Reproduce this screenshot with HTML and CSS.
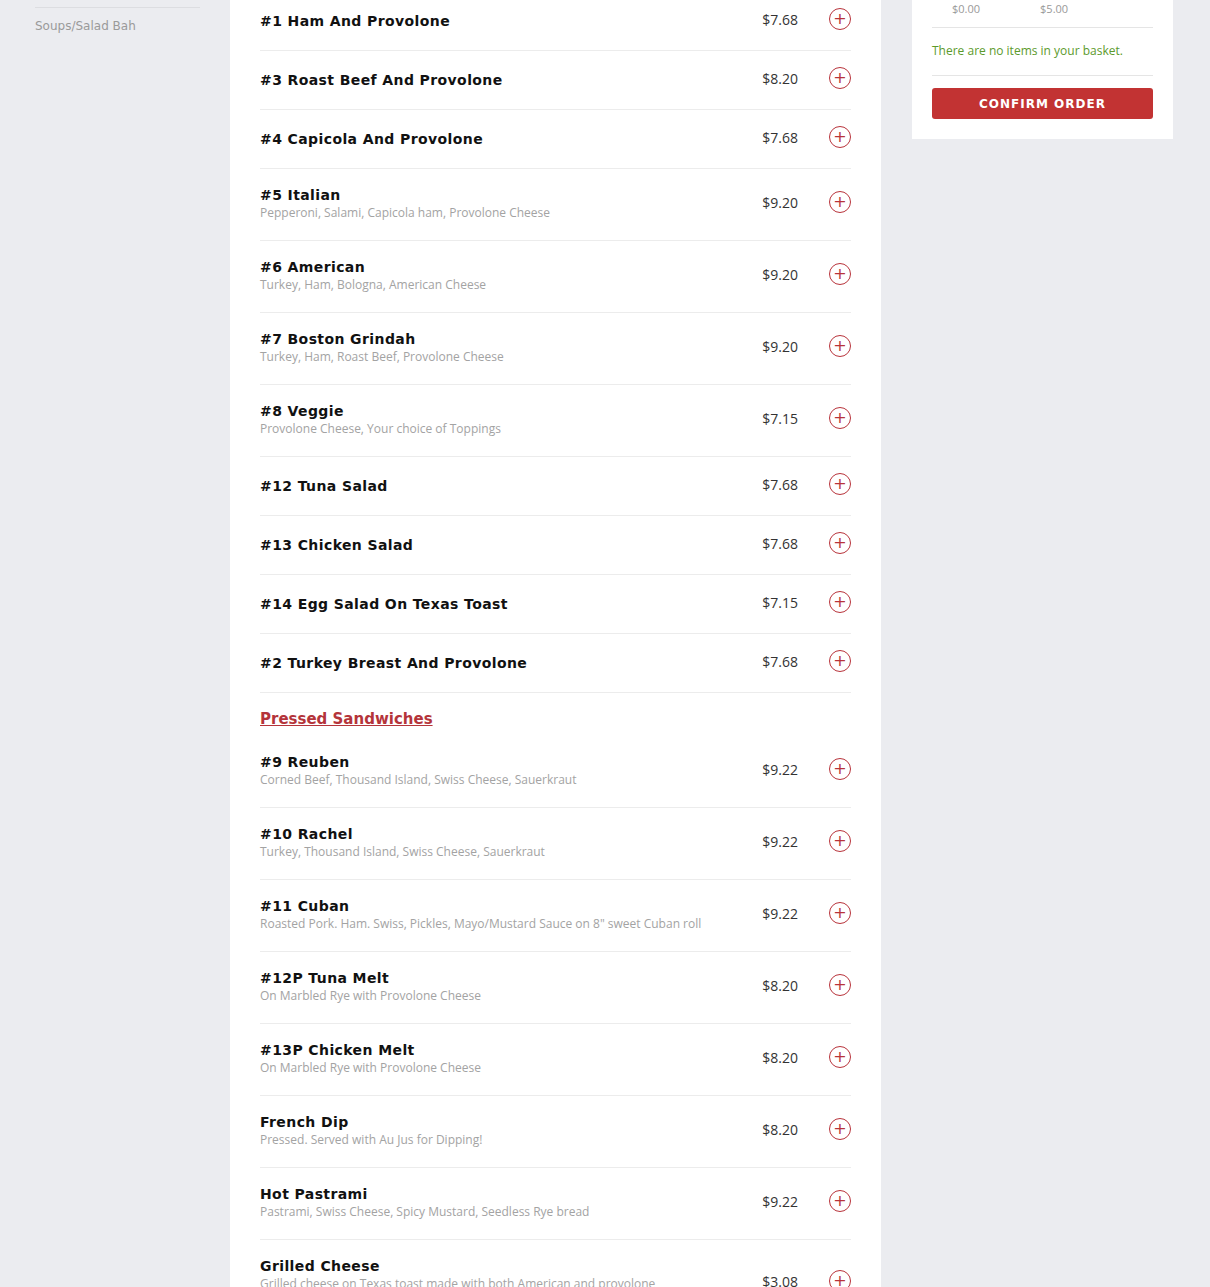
FILE: index.html
```html
<!DOCTYPE html>
<html lang="en">
<head>
  <meta charset="UTF-8" />
  <meta name="viewport" content="width=device-width, initial-scale=1.0"/>
  <title>Menu</title>
  <link rel="stylesheet" href="styles.css">
</head>
<body>
  <div class="page">
    <aside class="sidebar">
      <a class="cat-link" href="#">Soups/Salad Bah</a>
    </aside>

    <main class="menu">
      <ul class="items">
        <li class="item"><div class="info"><h3>#1 Ham And Provolone</h3></div><span class="price">$7.68</span><button class="add">+</button></li>
        <li class="item"><div class="info"><h3>#3 Roast Beef And Provolone</h3></div><span class="price">$8.20</span><button class="add">+</button></li>
        <li class="item"><div class="info"><h3>#4 Capicola And Provolone</h3></div><span class="price">$7.68</span><button class="add">+</button></li>
        <li class="item"><div class="info"><h3>#5 Italian</h3><p>Pepperoni, Salami, Capicola ham, Provolone Cheese</p></div><span class="price">$9.20</span><button class="add">+</button></li>
        <li class="item"><div class="info"><h3>#6 American</h3><p>Turkey, Ham, Bologna, American Cheese</p></div><span class="price">$9.20</span><button class="add">+</button></li>
        <li class="item"><div class="info"><h3>#7 Boston Grindah</h3><p>Turkey, Ham, Roast Beef, Provolone Cheese</p></div><span class="price">$9.20</span><button class="add">+</button></li>
        <li class="item"><div class="info"><h3>#8 Veggie</h3><p>Provolone Cheese, Your choice of Toppings</p></div><span class="price">$7.15</span><button class="add">+</button></li>
        <li class="item"><div class="info"><h3>#12 Tuna Salad</h3></div><span class="price">$7.68</span><button class="add">+</button></li>
        <li class="item"><div class="info"><h3>#13 Chicken Salad</h3></div><span class="price">$7.68</span><button class="add">+</button></li>
        <li class="item"><div class="info"><h3>#14 Egg Salad On Texas Toast</h3></div><span class="price">$7.15</span><button class="add">+</button></li>
        <li class="item"><div class="info"><h3>#2 Turkey Breast And Provolone</h3></div><span class="price">$7.68</span><button class="add">+</button></li>
      </ul>

      <h2 class="section-title">Pressed Sandwiches</h2>
      <ul class="items">
        <li class="item"><div class="info"><h3>#9 Reuben</h3><p>Corned Beef, Thousand Island, Swiss Cheese, Sauerkraut</p></div><span class="price">$9.22</span><button class="add">+</button></li>
        <li class="item"><div class="info"><h3>#10 Rachel</h3><p>Turkey, Thousand Island, Swiss Cheese, Sauerkraut</p></div><span class="price">$9.22</span><button class="add">+</button></li>
        <li class="item"><div class="info"><h3>#11 Cuban</h3><p>Roasted Pork. Ham. Swiss, Pickles, Mayo/Mustard Sauce on 8" sweet Cuban roll</p></div><span class="price">$9.22</span><button class="add">+</button></li>
        <li class="item"><div class="info"><h3>#12P Tuna Melt</h3><p>On Marbled Rye with Provolone Cheese</p></div><span class="price">$8.20</span><button class="add">+</button></li>
        <li class="item"><div class="info"><h3>#13P Chicken Melt</h3><p>On Marbled Rye with Provolone Cheese</p></div><span class="price">$8.20</span><button class="add">+</button></li>
        <li class="item"><div class="info"><h3>French Dip</h3><p>Pressed. Served with Au Jus for Dipping!</p></div><span class="price">$8.20</span><button class="add">+</button></li>
        <li class="item"><div class="info"><h3>Hot Pastrami</h3><p>Pastrami, Swiss Cheese, Spicy Mustard, Seedless Rye bread</p></div><span class="price">$9.22</span><button class="add">+</button></li>
        <li class="item"><div class="info"><h3>Grilled Cheese</h3><p>Grilled cheese on Texas toast made with both American and provolone<br>cheese.</p></div><span class="price">$3.08</span><button class="add">+</button></li>
      </ul>
    </main>

    <aside class="basket">
      <div class="totals">
        <span>$0.00</span>
        <span>$5.00</span>
      </div>
      <p class="empty">There are no items in your basket.</p>
      <button class="confirm">Confirm Order</button>
    </aside>
  </div>
</body>
</html>
```

FILE: styles.css
```css
body {
  margin: 0;
  background-color: #ebecf0;
  font-family: "Open Sans", sans-serif;
  color: #222;
}
.page {
  display: flex;
  align-items: flex-start;
  padding-left: 35px;
}
.sidebar {
  width: 165px;
  margin-right: 30px;
  margin-top: 7px;
  border-top: 1px solid #dcdde1;
  padding-top: 5px;
}
.cat-link {
  font-family: "DejaVu Sans", sans-serif;
  font-size: 12px;
  line-height: 16px;
  color: #9a9a9a;
  text-decoration: none;
}
.menu {
  width: 591px;
  background-color: #fff;
  padding: 0 30px 40px;
  margin-top: -8px;
}
.items {
  list-style: none;
  margin: 0;
  padding: 0;
}
.item {
  display: flex;
  align-items: center;
  min-height: 58px;
  border-bottom: 1px solid #ececec;
}
.item:has(p) {
  min-height: 0;
  padding: 17px 0 19px;
}
.info {
  width: 448px;
  margin-right: auto;
}
.info h3 {
  margin: 0;
  font-family: "DejaVu Sans", sans-serif;
  font-size: 14px;
  font-weight: bold;
  letter-spacing: 0.4px;
  color: #111;
  line-height: 18px;
}
.info p {
  margin: 0;
  font-size: 12px;
  line-height: 17px;
  color: #a3a3a3;
}
.price {
  font-size: 14px;
  color: #333;
  margin-right: 31px;
  margin-bottom: 3px;
}
.add {
  width: 22px;
  height: 22px;
  border: 1px solid #b8333b;
  border-radius: 50%;
  background: #fff;
  color: #b8333b;
  font-family: "DejaVu Sans", sans-serif;
  font-size: 16px;
  line-height: 18px;
  padding: 0;
  margin-bottom: 4px;
}
.section-title {
  margin: 0;
  height: 43px;
  line-height: 52px;
  font-family: "DejaVu Sans", sans-serif;
  font-size: 15px;
  font-weight: bold;
  color: #b4343a;
  text-decoration: underline;
}
.basket {
  width: 221px;
  margin-left: 31px;
  background-color: #fff;
  padding: 0 20px 20px;
}
.totals {
  display: flex;
  gap: 60px;
  padding: 1px 20px 11px;
  border-bottom: 1px solid #e5e5e5;
  font-size: 11px;
  color: #999;
}
.empty {
  margin: 0;
  padding: 14px 0 16px;
  border-bottom: 1px solid #e5e5e5;
  font-size: 12px;
  color: #5c9a2c;
}
.confirm {
  display: block;
  width: 100%;
  height: 31px;
  margin-top: 12px;
  border: none;
  border-radius: 3px;
  background-color: #c23333;
  color: #fff;
  font-family: "DejaVu Sans", sans-serif;
  font-size: 12px;
  font-weight: bold;
  letter-spacing: 1px;
  text-transform: uppercase;
}
```
